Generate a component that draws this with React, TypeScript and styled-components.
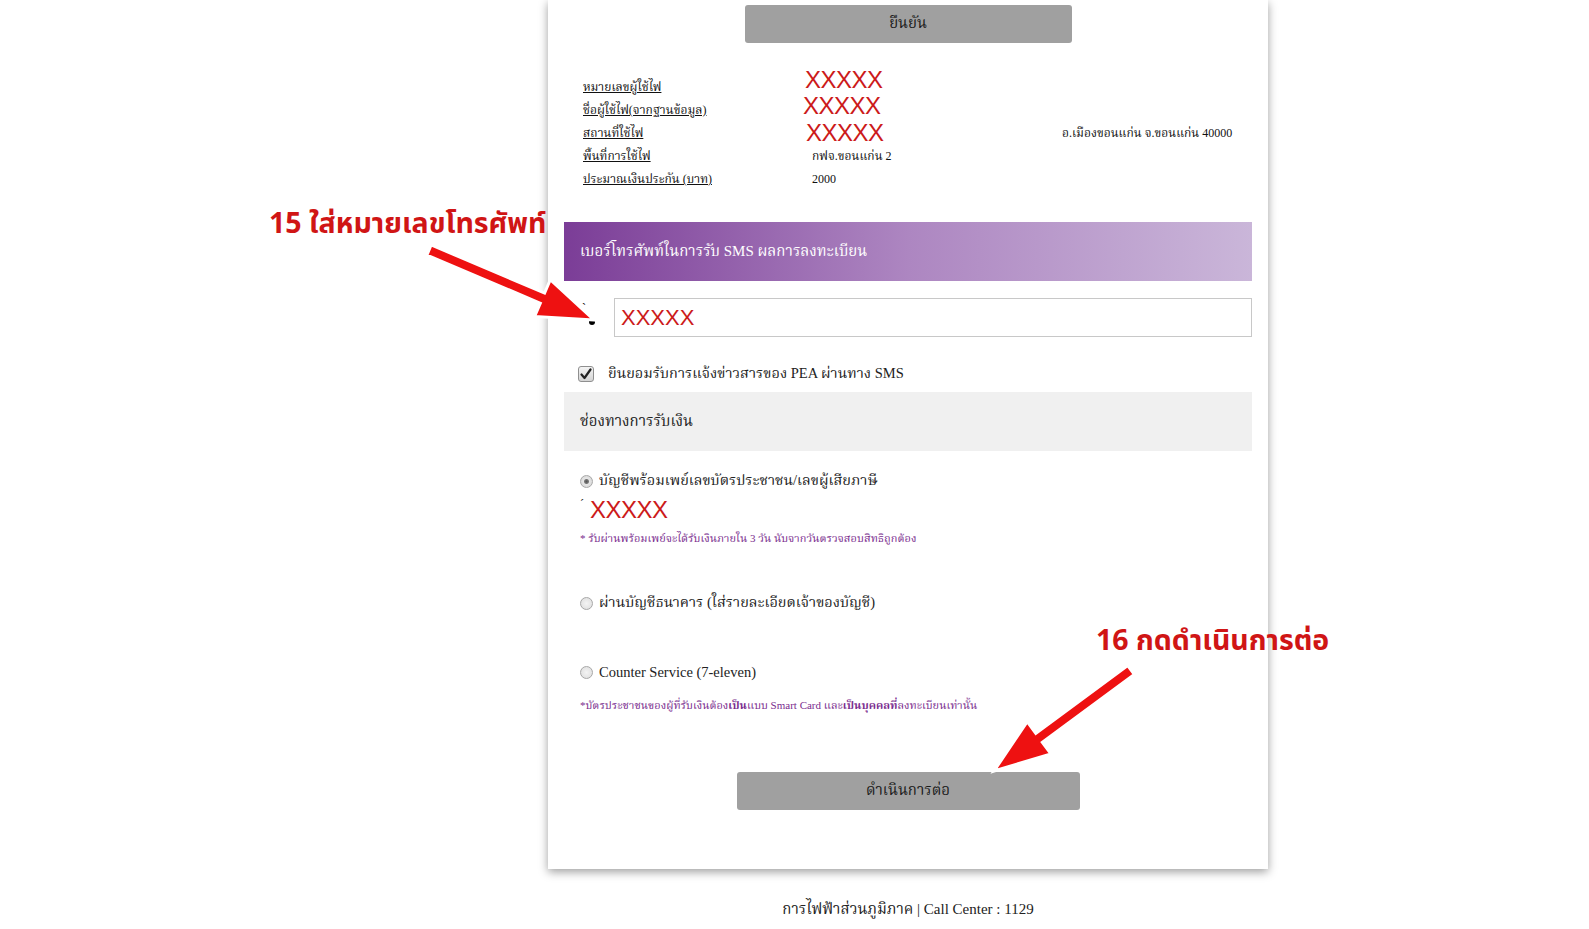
import styled, { createGlobalStyle } from 'styled-components'

const GlobalStyle = createGlobalStyle`
  html, body {
    margin: 0;
    padding: 0;
    background: #ffffff;
  }
  body {
    font-family: "Liberation Serif", "Noto Serif Thai", "Noto Sans Thai", serif;
    color: #222222;
  }
`

// lift = how far the hand-written mask sits above the row's text
const infoRows = [
  { label: 'หมายเลขผู้ใช้ไฟ', value: 'XXXXX', lift: 8, shift: 0, extra: '' },
  { label: 'ชื่อผู้ใช้ไฟ(จากฐานข้อมูล)', value: 'XXXXX', lift: 4.5, shift: -2, extra: '' },
  { label: 'สถานที่ใช้ไฟ', value: 'XXXXX', lift: 0.5, shift: 1, extra: 'อ.เมืองขอนแก่น จ.ขอนแก่น 40000' },
  { label: 'พื้นที่การใช้ไฟ', value: 'กฟจ.ขอนแก่น 2', lift: null, shift: 0, extra: '' },
  { label: 'ประมาณเงินประกัน (บาท)', value: '2000', lift: null, shift: 0, extra: '' },
]

function arrowPoints(x1: number, y1: number, x2: number, y2: number) {
  const dx = x2 - x1
  const dy = y2 - y1
  const len = Math.hypot(dx, dy)
  const ux = dx / len
  const uy = dy / len
  const nx = -uy
  const ny = ux
  const shaft = 5.5
  const headLen = 56
  const headW = 20
  const bx = x2 - ux * headLen
  const by = y2 - uy * headLen
  const pts = [
    [x1 + nx * shaft, y1 + ny * shaft],
    [bx + nx * shaft, by + ny * shaft],
    [bx + nx * headW, by + ny * headW],
    [x2, y2],
    [bx - nx * headW, by - ny * headW],
    [bx - nx * shaft, by - ny * shaft],
    [x1 - nx * shaft, y1 - ny * shaft],
  ]
  return pts.map(p => `${p[0].toFixed(1)},${p[1].toFixed(1)}`).join(' ')
}

export default function App() {
  return (
    <>
      <GlobalStyle />
      <Page>
        <Card>
          <ButtonRow $top={5}>
            <GrayButton $width={327}>ยืนยัน</GrayButton>
          </ButtonRow>

          <InfoGrid>
            {infoRows.map(row => (
              <InfoRow key={row.label}>
                <InfoLabel>{row.label}</InfoLabel>
                {row.lift !== null ? (
                  <MaskValue $lift={row.lift} $shift={row.shift}>
                    {row.value}
                  </MaskValue>
                ) : (
                  <InfoValue $indent={7}>{row.value}</InfoValue>
                )}
                <InfoValue>{row.extra}</InfoValue>
              </InfoRow>
            ))}
          </InfoGrid>

          <PurpleHeader>เบอร์โทรศัพท์ในการรับ SMS ผลการลงทะเบียน</PurpleHeader>

          <PhoneRow>
            <RequiredMark>
              <MarkTick>`</MarkTick>
              <MarkDot />
            </RequiredMark>
            <PhoneInput readOnly value="XXXXX" />
          </PhoneRow>

          <CheckRow>
            <CheckBox>
              <svg width="12" height="12" viewBox="0 0 12 12">
                <path d="M1.5 6.5 L4.5 10 L10.5 1.5" fill="none" stroke="#222" strokeWidth="2.2" strokeLinecap="round" strokeLinejoin="round" />
              </svg>
            </CheckBox>
            <CheckLabel>ยินยอมรับการแจ้งข่าวสารของ PEA ผ่านทาง SMS</CheckLabel>
          </CheckRow>

          <GraySection>ช่องทางการรับเงิน</GraySection>

          <Options>
            <OptionRow $top={21}>
              <Radio $checked />
              <OptionLabel>บัญชีพร้อมเพย์เลขบัตรประชาชน/เลขผู้เสียภาษี</OptionLabel>
            </OptionRow>
            <MaskLine>
              <Tick>´</Tick>
              <MaskValue $lift={0} $shift={0}>XXXXX</MaskValue>
            </MaskLine>
            <Note $top={13}>* รับผ่านพร้อมเพย์จะได้รับเงินภายใน 3 วัน นับจากวันตรวจสอบสิทธิถูกต้อง</Note>

            <OptionRow $top={46}>
              <Radio />
              <OptionLabel>ผ่านบัญชีธนาคาร (ใส่รายละเอียดเจ้าของบัญชี)</OptionLabel>
            </OptionRow>

            <OptionRow $top={51}>
              <Radio />
              <OptionLabel>Counter Service (7-eleven)</OptionLabel>
            </OptionRow>
            <Note $top={16}>
              *บัตรประชาชนของผู้ที่รับเงินต้อง<b>เป็น</b>แบบ Smart Card และ<b>เป็นบุคคลที่</b>ลงทะเบียนเท่านั้น
            </Note>
          </Options>

          <ButtonRow $top={57}>
            <GrayButton $width={343}>ดำเนินการต่อ</GrayButton>
          </ButtonRow>
        </Card>

        <Footer>การไฟฟ้าส่วนภูมิภาค | Call Center : 1129</Footer>

        <Callout $x={269} $y={203}>15 ใส่หมายเลขโทรศัพท์</Callout>
        <Callout $x={1096} $y={620}>16 กดดำเนินการต่อ</Callout>

        <Overlay width="1589" height="929" viewBox="0 0 1589 929">
          <polygon points={arrowPoints(429, 250, 594, 320)} fill="#ee1111" stroke="#ffffff" strokeWidth="3" />
          <polygon points={arrowPoints(1131, 670, 994, 771)} fill="#ee1111" stroke="#ffffff" strokeWidth="3" />
        </Overlay>
      </Page>
    </>
  )
}

const Page = styled.div`
  position: relative;
  width: 1589px;
  min-height: 929px;
  padding-left: 548px;
  box-sizing: border-box;
  overflow: hidden;
`

const Card = styled.div`
  width: 720px;
  height: 869px;
  box-sizing: border-box;
  padding: 0 16px;
  background: #ffffff;
  box-shadow: 0 3px 9px rgba(0, 0, 0, 0.38);
  display: flex;
  flex-direction: column;
`

const ButtonRow = styled.div<{ $top: number }>`
  display: flex;
  justify-content: center;
  margin-top: ${p => p.$top}px;
`

const GrayButton = styled.div<{ $width: number }>`
  width: ${p => p.$width}px;
  height: 38px;
  display: flex;
  align-items: center;
  justify-content: center;
  background: #a0a0a0;
  border-radius: 3px;
  color: #1a1a1a;
  font-size: 15px;
`

const InfoGrid = styled.div`
  display: flex;
  flex-direction: column;
  margin-top: 33px;
  padding-left: 19px;
`

const InfoRow = styled.div`
  display: grid;
  grid-template-columns: 222px 257px 1fr;
  height: 23px;
  align-items: center;
`

const InfoLabel = styled.span`
  font-size: 12px;
  text-decoration: underline;
  color: #111111;
`

const InfoValue = styled.span<{ $indent?: number }>`
  font-size: 12px;
  color: #111111;
  padding-left: ${p => p.$indent ?? 0}px;
`

const MaskValue = styled.span<{ $lift: number; $shift: number }>`
  font-family: "Liberation Sans", Arial, sans-serif;
  font-size: 24px;
  line-height: 22px;
  color: #cc1a1a;
  letter-spacing: -0.5px;
  margin-top: ${p => -2 * p.$lift}px;
  margin-left: ${p => p.$shift}px;
`

const PurpleHeader = styled.div`
  margin-top: 31px;
  height: 59px;
  display: flex;
  align-items: center;
  padding-left: 16px;
  background: linear-gradient(to right, #7b3d97 0%, #ad86c1 50%, #cab6d9 100%);
  color: #ffffff;
  font-size: 15px;
`

const PhoneRow = styled.div`
  display: flex;
  align-items: center;
  margin-top: 17px;
  padding-left: 18px;
  gap: 19px;
`

const RequiredMark = styled.span`
  width: 13px;
  height: 30px;
  display: flex;
  flex-direction: column;
  justify-content: space-between;
  align-items: flex-end;
`

const MarkTick = styled.span`
  align-self: flex-start;
  font-size: 12px;
  line-height: 10px;
  color: #000000;
`

const MarkDot = styled.span`
  width: 6px;
  height: 6px;
  margin-bottom: 8px;
  border-radius: 50%;
  background: #000000;
`

const PhoneInput = styled.input`
  flex: 1;
  height: 39px;
  box-sizing: border-box;
  border: 1px solid #c8c8c8;
  padding: 0 6px;
  font-family: "Liberation Sans", Arial, sans-serif;
  font-size: 22px;
  color: #cc1a1a;
  outline: none;
  background: #ffffff;
`

const CheckRow = styled.div`
  display: flex;
  align-items: center;
  gap: 14px;
  height: 18px;
  margin-top: 28px;
  padding-left: 14px;
`

const CheckBox = styled.span`
  width: 14px;
  height: 14px;
  border: 1px solid #8f8f8f;
  border-radius: 3px;
  background: linear-gradient(#f4f4f4, #d4d4d4);
  display: flex;
  align-items: center;
  justify-content: center;
`

const CheckLabel = styled.span`
  font-size: 14.5px;
`

const GraySection = styled.div`
  margin-top: 9px;
  height: 59px;
  background: #f0f0f0;
  display: flex;
  align-items: center;
  padding-left: 16px;
  font-size: 15px;
`

const Options = styled.div`
  display: flex;
  flex-direction: column;
  padding-left: 16px;
`

const OptionRow = styled.div<{ $top: number }>`
  display: flex;
  align-items: center;
  gap: 6px;
  margin-top: ${p => p.$top}px;
  height: 18px;
`

const Radio = styled.span<{ $checked?: boolean }>`
  width: 11px;
  height: 11px;
  border-radius: 50%;
  border: 1px solid #a8a8a8;
  background: ${p =>
    p.$checked
      ? 'radial-gradient(circle, #555 0, #777 2px, #e6e6e6 3px, #d0d0d0 100%)'
      : 'radial-gradient(circle, #f4f4f4 0, #dcdcdc 100%)'};
`

const OptionLabel = styled.span`
  font-size: 14.5px;
`

const MaskLine = styled.div`
  display: flex;
  align-items: flex-start;
  gap: 6px;
  margin-top: 9px;
  height: 18px;
`

const Tick = styled.span`
  font-size: 12px;
  line-height: 10px;
`

const Note = styled.div<{ $top: number }>`
  margin-top: ${p => p.$top}px;
  font-size: 11px;
  color: #7a2c8e;

  b {
    font-weight: bold;
  }
`

const Footer = styled.div`
  width: 720px;
  text-align: center;
  margin-top: 29px;
  font-size: 15px;
  color: #222222;
`

const Callout = styled.div<{ $x: number; $y: number }>`
  position: absolute;
  left: ${p => p.$x}px;
  top: ${p => p.$y}px;
  font-family: "Noto Sans", "Noto Sans Thai", sans-serif;
  font-size: 28.5px;
  font-weight: bold;
  color: #d01515;
  white-space: nowrap;
`

const Overlay = styled.svg`
  position: absolute;
  left: 0;
  top: 0;
  pointer-events: none;
`
